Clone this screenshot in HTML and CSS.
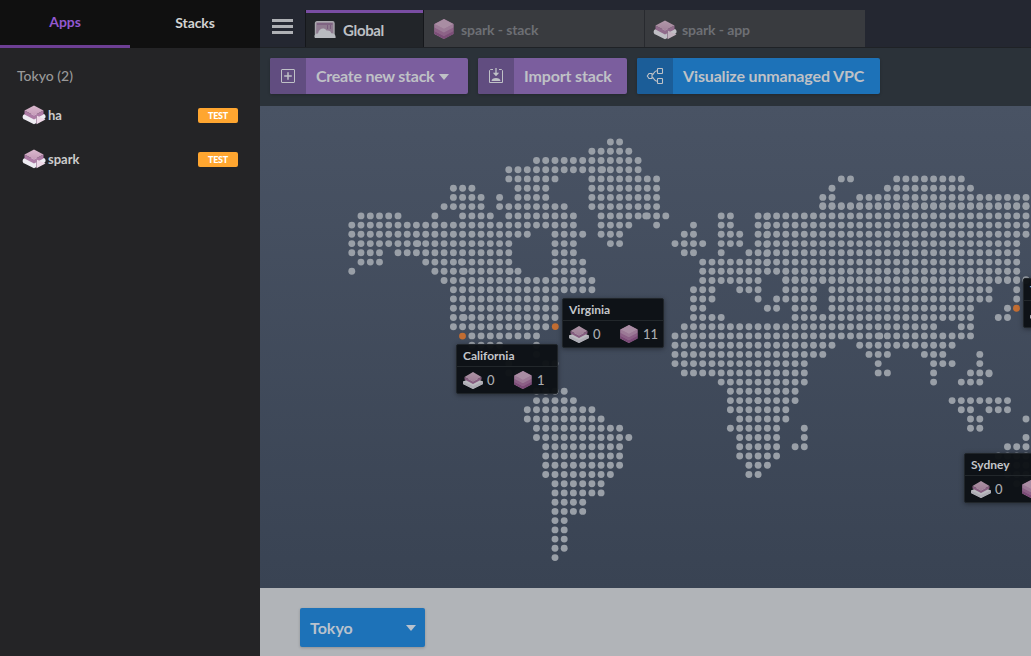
FILE: index.html
```html
<!DOCTYPE html>
<html lang="en">
<head>
<meta charset="utf-8">
<title>Global</title>
<link rel="stylesheet" href="styles.css">
</head>
<body>
<svg class="defs" width="0" height="0" aria-hidden="true">
  <defs>
    <linearGradient id="mapFill" x1="0" y1="0" x2="0" y2="1"><stop offset="0" stop-color="#d9b8cd"/><stop offset="1" stop-color="#c69bb9"/></linearGradient>
    <symbol id="stack" viewBox="0 0 20 20">
      <path d="M10 0 19.500 5V15L10 20 .5 15V5z" fill="#9f6a97"/>
      <path d="M.5 5 10 10V20L.5 15z" fill="#ad7fa6"/>
      <path d="M.5 12 10 17l9.500-5V15L10 20 .5 15z" fill="#8f5588"/>
      <path d="M.5 8.500 10 13.500l9.500-5V12L10 17 .5 12z" fill="#a26d9a"/>
      <path d="M.5 5 10 10l9.500-5v3.500L10 13.500 .5 8.500z" fill="#b58cad"/>
      <path d="M10 0 19.500 5 10 10 .5 5z" fill="#c5a2bc"/>
    </symbol>
    <symbol id="layer" viewBox="0 0 20 17">
      <path d="M0 9.500 10 5l10 4.500v2.500L10 17 0 12z" fill="#eceaf0"/>
      <path d="M0 9.500 10 14l10-4.500v2.500L10 17 0 12z" fill="#dad8e0"/>
      <path d="M1.500 5 10 9.500 18.500 5v2.500L10 12 1.500 7.500z" fill="#a8739e"/>
      <path d="M10 0 18.500 5 10 9.500 1.500 5z" fill="url(#mapFill)"/>
    </symbol>
    <symbol id="app" viewBox="0 0 24 20">
      <path d="M3 9h18.500c2.700.5 2.700 4 .5 5L12 19.300 2.500 14.500C-.3 13.500.2 9.500 3 9z" fill="#eeecf2"/>
      <path d="M2.500 5.500 12 10.500l9.500-5v4L12 14.500 2.500 9.500z" fill="#ad7ba5"/>
      <path d="M12 .5 21.500 5.500 12 10.500 2.500 5.500z" fill="url(#mapFill)"/>
      <path d="M14.500 10.500 23.500 14.500l-9 4.700z" fill="#eed9e7"/>
      <path d="M14.500 10.500v8.500" stroke="#8f6c89" stroke-width=".6" fill="none"/>
    </symbol>
  </defs>
</svg>
<div class="shell">
  <aside class="sidebar">
    <nav class="side-tabs"><a class="side-tab active">Apps</a><a class="side-tab">Stacks</a></nav>
    <h2 class="region">Tokyo (2)</h2>
    <ul class="apps">
      <li class="app-row"><svg class="app-icon"><use href="#app"/></svg><span class="app-name">ha</span><span class="badge">TEST</span></li>
      <li class="app-row"><svg class="app-icon"><use href="#app"/></svg><span class="app-name">spark</span><span class="badge">TEST</span></li>
    </ul>
  </aside>
  <main class="main">
    <header class="tabs">
      <div class="burger"><i></i><i></i><i></i></div>
      <div class="tab current">
        <svg class="cloud" viewBox="0 0 22 17"><rect x="1.500" y=".7" width="18.500" height="14" rx="1.500" fill="#8f7b90" stroke="#a9a7ad" stroke-width="1.400"/><path d="M3 3h15.500" stroke="#75567a" stroke-width="1.200"/><path d="M13.500 4v4M16.500 4v4" stroke="#75567a" stroke-width=".8"/><path d="M1 17c-1.500-2 0-5 3-4.500C5 7.500 10 6 12.500 9.500c3-.5 4.500 1 4.700 2.800 3-.3 5 2.200 4.300 4.700z" fill="#b9bbc0"/></svg>
        <span>Global</span>
      </div>
      <div class="tab stack-tab"><svg class="tab-stack"><use href="#stack"/></svg><span>spark - stack</span></div>
      <div class="tab app-tab"><svg class="tab-app"><use href="#app"/></svg><span>spark - app</span></div>
    </header>
    <div class="toolbar">
      <button class="action create"><span class="action-icon"><svg width="16" height="16" viewBox="0 0 16 16" fill="none" stroke="currentColor"><rect x="1.500" y="1.500" width="13" height="13" rx=".5"/><path d="M8 4.200v7.600M4.200 8h7.600" stroke-width="1.500"/></svg></span><span class="action-text">Create new stack<i class="caret"></i></span></button>
      <button class="action import"><span class="action-icon"><svg width="16" height="16" viewBox="0 0 16 16" fill="none" stroke="currentColor"><path d="M5 1.500H2.500L1.500 2.500v12h13v-12L13.500 1.500H11"/><path d="M8 0v6" stroke-width="1.300"/><path d="M4.800 4.800h6.400L8 8.200zM3.500 13c0-2 2-3 4.500-3s4.500 1 4.500 3z" fill="currentColor" stroke="none"/></svg></span><span class="action-text">Import stack</span></button>
      <button class="action visualize"><span class="action-icon"><svg width="18" height="18" viewBox="0 0 18 18" fill="none" stroke="currentColor" stroke-width="1.100"><path d="M1.300 9 3 6.500h3v5H3z"/><rect x="11.500" y="1.500" width="5" height="5" rx=".6"/><rect x="11.500" y="11.500" width="5" height="5" rx=".6"/><path d="M6 8c2.500-1 1.500-4 5-4.200M6 10c2.500 1 1.500 4 5 4.200"/></svg></span><span class="action-text">Visualize unmanaged VPC</span></button>
    </div>
    <section class="map">
      <svg id="world" class="world" width="771" height="482" viewBox="260 106 771 482"></svg>
      <article class="pin california"><h3>California</h3><div class="counts"><svg class="layer"><use href="#layer"/></svg><b>0</b><svg class="cube"><use href="#stack"/></svg><b>1</b></div></article>
      <article class="pin virginia"><h3>Virginia</h3><div class="counts"><svg class="layer"><use href="#layer"/></svg><b>0</b><svg class="cube"><use href="#stack"/></svg><b>11</b></div></article>
      <article class="pin sydney"><h3>Sydney</h3><div class="counts"><svg class="layer"><use href="#layer"/></svg><b>0</b><svg class="cube"><use href="#stack"/></svg></div></article>
      <article class="pin tokyo"><h3>Tokyo</h3><div class="counts"><svg class="layer"><use href="#layer"/></svg></div></article>
    </section>
    <footer class="bottom"><button class="select">Tokyo<i class="caret"></i></button></footer>
  </main>
</div>
<script src="map.js"></script>
</body>
</html>
```
FILE: map.js
```js
// Runs of land cells for each row of the dotted world map.
const rows = [
  '28-29', '26-30', '20-31', '17-31', '17-22 26-33 53-54 59-66',
  '11-13 18-21 26-33 52 58-67', '11-14 16 18-21 26-33 51-52 55-74',
  '10-14 16-23 26-33 51-74', '1-5 9 12-15 17-24 27-34 40-41 44-74',
  '0-24 27-30 33 37 40-41 44-73', '0-19 22-25 27-29 36-37 40-42 44-73',
  '0-17 22-24 28-29 35-38 40-42 44-72', '0-3 5-17 22-24 36-37 40 43-72',
  '1-3 8-17 22-25 38-72', '0 9-18 22-25 38-72', '10-26 38-44 47-73',
  '11-26 37-39 42-44 47-50 52-69 72', '11-22 37-39 44 46-50 52-69 72',
  '11-22 37-38 45-46 48-50 52-67 71', '11-22 37-40 48-67 70-71',
  '11-21 36-63 66-67', '13-20 35-67', '13-16 20 35-52 55-65',
  '16 20 35-51 56-58 62-64 68', '17 21-22 35-49 57 63-65 68',
  '17-18 36-49 57-58 63 67-69', '40-49 63 66-68', '20-23 41-48',
  '20-24 41-48 65-71', '19-26 41-47 66-67 69-71', '19-27 42-47 67-68 73',
  '20-29 41-46 49 67-68', '20-30 42-46 49 73', '21-29 42-46 48-49 71-73',
  '21-29 42-46 70-73', '21-29 43-45 70-73', '21-28 43-44 71-73', '22-27 72-73',
  '22-27', '22-25', '22-25', '22-23', '22-23', '22-23', '22-23', '22'
];
const step = 9.235;
const left = 351.8;
const top0 = 142;
const dots = [];
const dot = (x, y, cls = 'land') =>
  dots.push(`<circle class="${cls}" cx="${x.toFixed(1)}" cy="${y.toFixed(1)}" r="3.45"/>`);

rows.forEach((row, r) => row.split(' ').forEach(run => {
  const [from, to = from] = run.split('-').map(Number);
  for (let c = from; c <= to; c++) {
    const x = left + c * step;
    const y = top0 + r * step;
    dot(x, y);
    if ((r === 7 && c > 50) || (r === 15 && c > 46)) dot(x, y - 0.9);
    if (c === 45 && r > 7 && r < 14) dot(x - 0.6, y + 0.6);
  }
}));
[[417.7, 243.6], [461.5, 262], [464, 271.3], [510, 271.3], [464, 317.5],
 [602.5, 169.7], [645.8, 215.9], [758, 400.6], [989, 373.8], [879.8, 335.9]].forEach(p => dot(...p));
[[462.5, 336.1], [555.3, 326.6], [1016.5, 308.3]].forEach(p => dot(...p, 'site'));
document.getElementById('world').innerHTML = `<g>${dots.join('')}</g>`;
```
FILE: styles.css
```css
* { box-sizing: border-box; }
body { margin: 0; overflow: hidden; font-family: Lato, "Liberation Sans", sans-serif; font-weight: 700; }
.defs { position: absolute; }
.shell { display: flex; width: 1031px; height: 656px; overflow: hidden; }
.sidebar { width: 260px; flex: none; background: #242426; color: #ccc; }
.side-tabs { display: flex; height: 48px; background: #101010; font-size: 14px; }
.side-tab { width: 130px; height: 48px; line-height: 46px; text-align: center; color: #d2d2d2; letter-spacing: -.1px; }
.side-tab.active { color: #9358d0; border-bottom: 3px solid #6d3f94; line-height: 44px; }
.region { margin: 18px 0 0 17px; font-size: 14px; line-height: 20px; font-weight: 500; color: #999; }
.apps { list-style: none; margin: 7px 0 0; padding: 0 22px; }
.app-row { display: flex; align-items: center; height: 44px; font-size: 14px; }
.app-icon { width: 24px; height: 20px; }
.app-name { flex: 1; margin-left: 2px; font-size: 13px; }
.badge { width: 40px; height: 15px; border-radius: 2px; background: #ffa630; color: #fff; font-size: 9px; line-height: 15px; text-align: center; font-weight: 900; letter-spacing: -.2px; }
.main { width: 771px; flex: none; display: flex; flex-direction: column; }
.tabs { display: flex; height: 48px; padding-top: 10px; background: #242731; border-bottom: 1px solid #1f2226; }
.burger { width: 45px; padding: 9px 0 0 12px; display: flex; flex-direction: column; gap: 3px; }
.burger i { width: 21px; height: 3px; background: #afb1b5; }
.tab { display: flex; align-items: center; height: 37px; background: #393b3f; color: #6d6f74; font-size: 14px; border-right: 1px solid #282a2f; }
.current { width: 119px; padding: 0 0 0 9px; gap: 6px; background: #222529; color: #bec0c4; border: solid #15171b; border-width: 0 1px; box-shadow: inset 0 3px #794da2; font-size: 15px; }
.current span { padding-top: 2px; letter-spacing: -.35px; }
.cloud { width: 22px; height: 17px; margin: 2px 0 0 -1px; flex: none; }
.current span { margin-left: 1px; }
.stack-tab { width: 221px; padding-left: 10px; gap: 7px; }
.stack-tab span, .app-tab span { padding-top: 2px; font-size: 14px; letter-spacing: -.1px; }
.app-tab { width: 220px; padding-left: 8px; gap: 5px; border-right: 0; }
.tab-stack { width: 20px; height: 20px; opacity: .8; }
.tab-app { width: 24px; height: 20px; opacity: .75; margin-top: 2px; }
.toolbar { display: flex; gap: 10px; height: 58px; padding: 10px; background: #2b3239; }
.action { display: flex; height: 36px; padding: 0; border: 0; border-radius: 2px; color: #bfc1c6; background: #7b5e9e; font: 700 16px Lato, sans-serif; overflow: hidden; box-shadow: 0 1px 3px #0003; white-space: nowrap; }
.action-icon { width: 36px; height: 36px; display: grid; place-items: center; background: #614d80; flex: none; }
.action-text { display: flex; align-items: center; height: 36px; padding: 0 0 1px 10px; letter-spacing: -.15px; }
.create { width: 198px; }
.create .action-text { letter-spacing: -.25px; }
.import { width: 149px; }
.visualize { width: 243px; background: #1d72b8; }
.visualize .action-icon { background: #1b5d98; }
.caret { width: 0; height: 0; border: 5px solid transparent; border-top: 6px solid currentColor; border-bottom: 0; }
.create .caret { margin: 2px 0 0 5px; }
.map { position: relative; height: 482px; overflow: hidden; background: linear-gradient(#495364, #394353); }
.world { display: block; }
.land { fill: #999fa7; }
.site { fill: #c26d32; }
.pin { position: absolute; width: 102px; height: 50px; border: 1px solid #20252a; border-radius: 2px; background: #0c1115f7; color: #c4c6ca; box-shadow: 0 1px 5px #0006; }
.pin h3 { margin: 0; padding-left: 6px; height: 22px; line-height: 22px; font-size: 12px; border-bottom: 1px solid #22272b; }
.counts { display: flex; align-items: center; height: 26px; padding-left: 6px; font-size: 13px; }
.counts b { width: 31px; flex: none; padding-left: 4px; color: #abadb1; font-weight: 500; }
.layer { width: 20px; height: 17px; opacity: .78; flex: none; }
.cube { width: 18px; height: 18px; opacity: .85; flex: none; }
.cube + b { width: 24px; padding-left: 5px; }
.california { left: 196px; top: 238px; }
.virginia { left: 302px; top: 192px; }
.sydney { left: 704px; top: 347px; }
.tokyo { left: 763px; top: 172px; }
.bottom { height: 68px; padding: 20px 40px; background: #b1b4b8; }
.select { display: flex; align-items: center; justify-content: space-between; width: 125px; height: 39px; padding: 0 9px 0 10px; border: 0; border-radius: 2px; background: #1d72b8; color: #b9c2cd; font: 700 16px Lato, sans-serif; box-shadow: 0 1px 3px #0003; }
```
